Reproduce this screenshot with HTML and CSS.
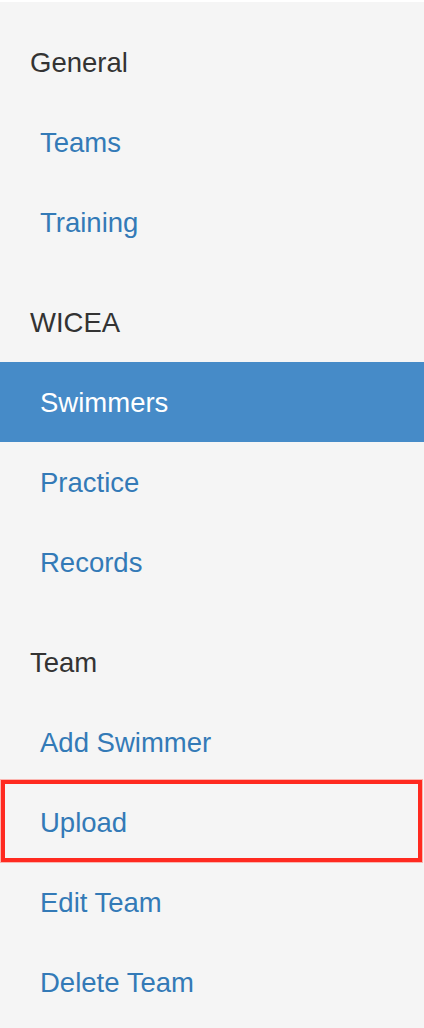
FILE: index.html
```html
<!DOCTYPE html>
<html>
<head>
<meta charset="utf-8">
<link rel="stylesheet" href="styles.css">
</head>
<body>
<nav class="sidebar">
  <div class="group">
    <div class="heading">General</div>
    <a class="link" href="#">Teams</a>
    <a class="link" href="#">Training</a>
  </div>
  <div class="group">
    <div class="heading">WICEA</div>
    <a class="link active" href="#">Swimmers</a>
    <a class="link" href="#">Practice</a>
    <a class="link" href="#">Records</a>
  </div>
  <div class="group">
    <div class="heading">Team</div>
    <a class="link" href="#">Add Swimmer</a>
    <a class="link highlight" href="#">Upload</a>
    <a class="link" href="#">Edit Team</a>
    <a class="link" href="#">Delete Team</a>
  </div>
</nav>
</body>
</html>
```
FILE: styles.css
```css
html, body {
  margin: 0;
  padding: 0;
  background: #ffffff;
}
body {
  font-family: "Liberation Sans", Arial, sans-serif;
  font-size: 27.5px;
}
.sidebar {
  margin-top: 2px;
  min-height: 1026px;
  background: #f5f5f5;
  padding-top: 20px;
  display: flex;
  flex-direction: column;
  gap: 20px;
  box-sizing: border-box;
}
.group {
  display: flex;
  flex-direction: column;
}
.heading {
  height: 80px;
  box-sizing: border-box;
  padding-top: 2px;
  display: flex;
  align-items: center;
  padding-left: 30px;
  color: #333333;
}
.link {
  position: relative;
  height: 80px;
  box-sizing: border-box;
  padding-top: 2px;
  display: flex;
  align-items: center;
  padding-left: 40px;
  color: #337ab7;
  text-decoration: none;
}
.link.active {
  background: #468bc8;
  color: #ffffff;
}
.link.highlight::after {
  content: "";
  position: absolute;
  left: 1px;
  right: 2px;
  top: -2px;
  bottom: 0;
  border: 4px solid #ff2a20;
  box-shadow: 0 0 0 1px rgba(255, 120, 110, 0.5);
}
```
